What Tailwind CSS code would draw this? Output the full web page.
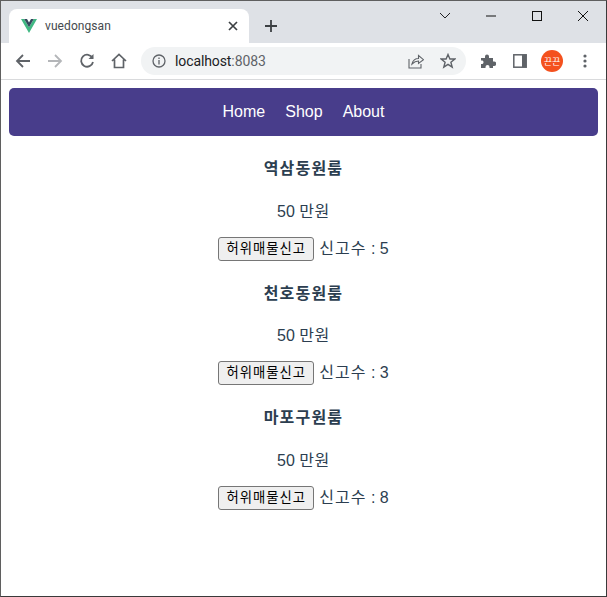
<!DOCTYPE html>
<html lang="en">

<head>
    <meta charset="UTF-8">
    <title>vuedongsan</title>
    <script src="https://cdn.jsdelivr.net/npm/@tailwindcss/browser@4"></script>
</head>

<body class="bg-white">
    <div class="h-[597px] w-[607px] overflow-hidden border border-[#5f5f5f] border-r-[#3a3a3a] border-b-[#3a3a3a] flex flex-col font-['Liberation_Sans','Noto_Sans_CJK_KR',sans-serif]">

        <!-- Tab strip -->
        <div class="h-[42px] shrink-0 bg-[#dee1e6] flex items-end pl-2 relative">
            <div class="h-[34px] w-[240px] bg-white rounded-t-lg flex items-center pl-[12px] pr-[11px]">
                <svg width="16" height="14" viewBox="0 0 16 14" class="shrink-0">
                    <path d="M0 0H3.2L8 8.2 12.8 0H16L8 14Z" fill="#41b883" />
                    <path d="M3.2 0H6L8 3.5 10 0H12.8L8 8.2Z" fill="#35495e" />
                </svg>
                <span class="ml-[8px] text-[12px] tracking-[0.08px] text-[#45494e] font-['Roboto',sans-serif]">vuedongsan</span>
                <svg width="10" height="10" viewBox="0 0 10 10" class="ml-auto" stroke="#3c4043" stroke-width="1.7" fill="none">
                    <path d="M1 1L9 9M9 1L1 9" />
                </svg>
            </div>
            <svg width="12" height="12" viewBox="0 0 12 12" class="ml-[15px] mb-[11px] translate-x-[1px]" stroke="#3c4043" stroke-width="1.8" fill="none">
                <path d="M6 0V12M0 6H12" />
            </svg>
            <!-- Window buttons -->
            <div class="absolute top-[9px] right-[17px] flex items-center">
                <svg width="12" height="12" viewBox="0 0 12 12" fill="none" stroke="#202124" stroke-width="1" class="mr-[34px]">
                    <path d="M1 3L6 8L11 3" />
                </svg>
                <svg width="12" height="12" viewBox="0 0 12 12" fill="none" stroke="#111" stroke-width="1" class="mr-[34px]">
                    <path d="M1 6H11" />
                </svg>
                <svg width="12" height="12" viewBox="0 0 12 12" fill="none" stroke="#111" stroke-width="1" class="mr-[34px]">
                    <rect x="1.5" y="1.5" width="9" height="9" />
                </svg>
                <svg width="12" height="12" viewBox="0 0 12 12" fill="none" stroke="#111" stroke-width="1">
                    <path d="M1 1L11 11M11 1L1 11" />
                </svg>
            </div>
        </div>

        <!-- Toolbar -->
        <div class="h-[37px] shrink-0 bg-white border-b border-[#d9dadc] flex items-center pl-[14px]">
            <svg width="16" height="16" viewBox="0 0 16 16" fill="none" stroke="#5f6368" stroke-width="1.8">
                <path d="M15 8H2M8 2L2 8L8 14" />
            </svg>
            <svg width="16" height="16" viewBox="0 0 16 16" fill="none" stroke="#b4b6b9" stroke-width="1.8" class="ml-[16px]">
                <path d="M1 8H14M8 2L14 8L8 14" />
            </svg>
            <svg width="16" height="16" viewBox="0 0 16 16" fill="none" stroke="#5f6368" stroke-width="1.8" class="ml-[16px]">
                <path d="M13.5 5A6 6 0 1 0 14 9" />
                <path d="M14.5 1V6H9.5Z" fill="#5f6368" stroke="none" />
            </svg>
            <svg width="16" height="16" viewBox="0 0 16 16" fill="none" stroke="#5f6368" stroke-width="1.7" class="ml-[16px]">
                <path d="M1 8L8 1.5L15 8M3.5 6.5V14.5H12.5V6.5" />
            </svg>

            <!-- Address bar -->
            <div class="ml-[14px] h-[28px] w-[325px] rounded-full bg-[#f1f3f4] flex items-center pl-[11px] pr-[10px]">
                <svg width="14" height="14" viewBox="0 0 14 14" fill="none" stroke="#5f6368" stroke-width="1.3">
                    <circle cx="7" cy="7" r="6" />
                    <path d="M7 6V10.5M7 3.5V5" />
                </svg>
                <span class="ml-[9px] text-[14px] tracking-[-0.1px] text-[#202124] font-['Roboto',sans-serif]">localhost<span class="text-[#5f6368]">:8083</span></span>
                <svg width="16" height="16" viewBox="0 0 16 16" fill="none" stroke="#5f6368" stroke-width="1.1" class="ml-auto">
                    <path d="M1 6V15H13V11M4 11C5 7 8 5.500 10.500 5.500V2.500L15.500 6.700L10.500 10.500V8C8 8 6 9 4 11Z" />
                </svg>
                <svg width="16" height="16" viewBox="0 0 16 16" fill="none" stroke="#5f6368" stroke-width="1.4" class="ml-[16px]">
                    <path d="M8 1.500L9.900 6H14.800L10.900 9.200L12.200 14.200L8 11.400L3.800 14.200L5.100 9.200L1.200 6H6.100Z" />
                </svg>
            </div>

            <!-- Extensions, side panel, profile, menu -->
            <svg width="16" height="16" viewBox="0 0 16 16" fill="#5f6368" class="ml-[14px]">
                <path d="M1 5H5V3.500A2 2 0 0 1 9 3.500V5H13V8.500H14A2.200 2.200 0 0 1 14 13H13V15H9.500V14A2 2 0 0 0 5.500 14V15H1V11H2.500A2 2 0 0 0 2.500 7.500H1Z" />
            </svg>
            <svg width="14" height="14" viewBox="0 0 14 14" class="ml-[17px]" fill="none" stroke="#5f6368" stroke-width="1.5">
                <rect x="0.8" y="0.8" width="12.4" height="12.400" />
                <rect x="9" y="1" width="4" height="12" fill="#5f6368" stroke="none" />
            </svg>
            <div class="ml-[14px] h-[22px] w-[22px] rounded-full bg-[#f4511e] flex items-center justify-center text-[9px] leading-none text-white font-['Noto_Sans_CJK_KR',sans-serif]">끈끈</div>
            <svg width="4" height="14" viewBox="0 0 4 14" fill="#5f6368" class="ml-[20px]">
                <circle cx="2" cy="2" r="1.600" />
                <circle cx="2" cy="7" r="1.600" />
                <circle cx="2" cy="12" r="1.600" />
            </svg>
        </div>

        <!-- Page -->
        <div class="flex-1 text-center text-[#2c3e50] text-[16px] leading-[18px]">
            <nav class="mx-2 mt-2 h-[48px] rounded-[5px] bg-[#483d8b] flex items-center justify-center gap-5 text-white">
                <a href="#">Home</a>
                <a href="#">Shop</a>
                <a href="#">About</a>
            </nav>

            <div class="pt-[24px] flex flex-col">
                <div class="h-[125px]">
                    <h4 class="font-bold tracking-[1.2px]">역삼동원룸</h4>
                    <p class="mt-[25px]"><span>50 </span><span class="tracking-[0.6px]">만원</span></p>
                    <div class="mt-[16px] flex items-center justify-center gap-[5px] h-[24px]">
                        <button class="h-[24px] w-[96px] rounded-[3px] border border-[#767676] bg-[#efefef] text-[13.333px] tracking-[1px] text-black">허위매물신고</button>
                        <span><span class="tracking-[1px]">신고수</span> : 5</span>
                    </div>
                </div>
                <div class="h-[124px]">
                    <h4 class="font-bold tracking-[1.2px]">천호동원룸</h4>
                    <p class="mt-[24px]"><span>50 </span><span class="tracking-[0.6px]">만원</span></p>
                    <div class="mt-[16px] flex items-center justify-center gap-[5px] h-[24px]">
                        <button class="h-[24px] w-[96px] rounded-[3px] border border-[#767676] bg-[#efefef] text-[13.333px] tracking-[1px] text-black">허위매물신고</button>
                        <span><span class="tracking-[1px]">신고수</span> : 3</span>
                    </div>
                </div>
                <div class="h-[124px]">
                    <h4 class="font-bold tracking-[1.2px]">마포구원룸</h4>
                    <p class="mt-[25px]"><span>50 </span><span class="tracking-[0.6px]">만원</span></p>
                    <div class="mt-[16px] flex items-center justify-center gap-[5px] h-[24px]">
                        <button class="h-[24px] w-[96px] rounded-[3px] border border-[#767676] bg-[#efefef] text-[13.333px] tracking-[1px] text-black">허위매물신고</button>
                        <span><span class="tracking-[1px]">신고수</span> : 8</span>
                    </div>
                </div>
            </div>
        </div>
    </div>
</body>

</html>
